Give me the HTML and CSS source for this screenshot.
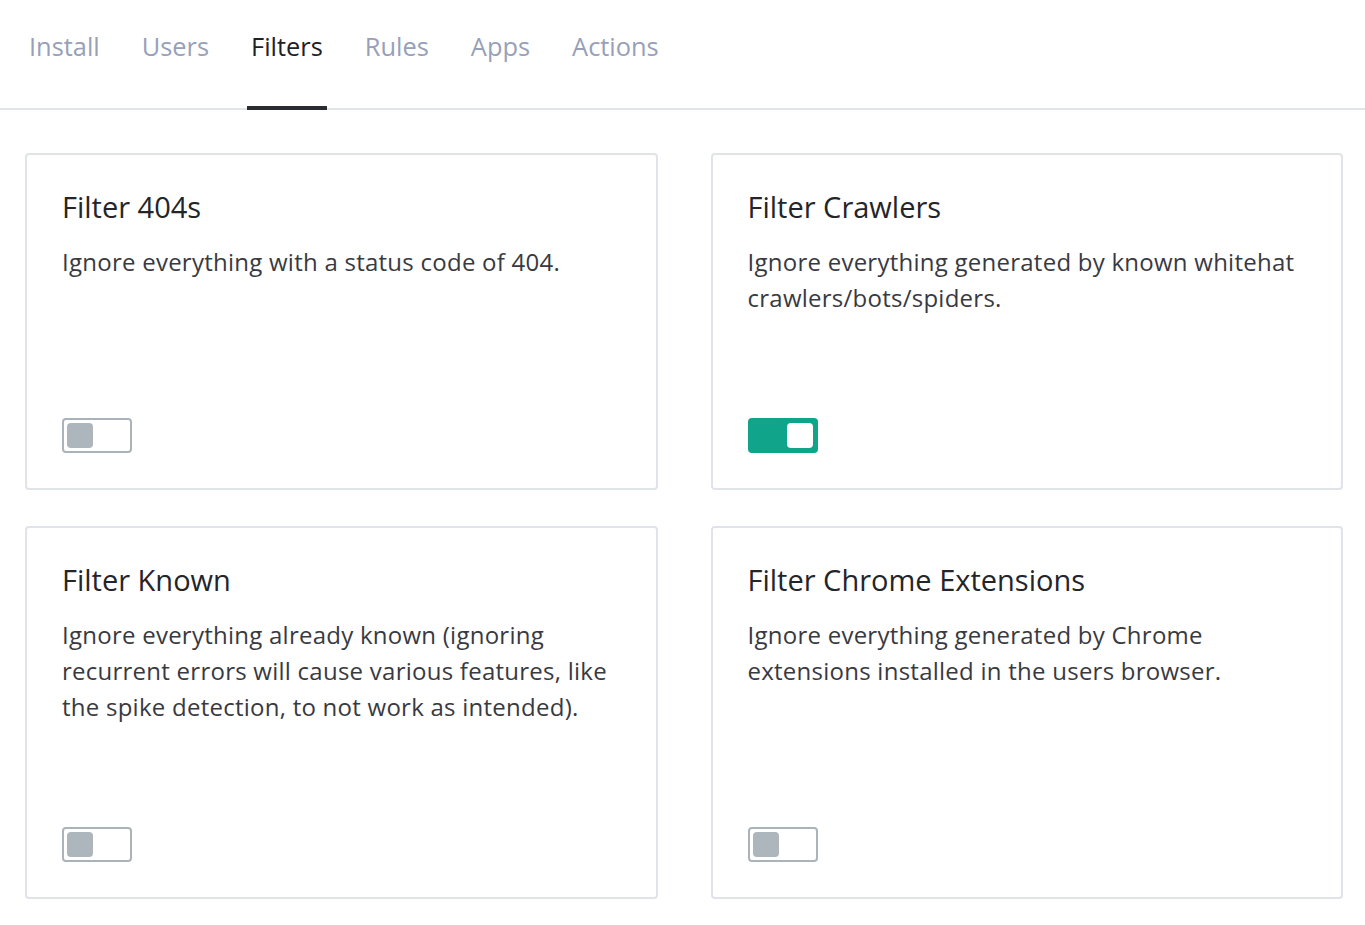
FILE: index.html
```html
<!DOCTYPE html>
<html lang="en">
<head>
<meta charset="utf-8">
<title>Filters</title>
<link rel="stylesheet" href="styles.css">
</head>
<body>
<nav class="tabs">
  <a class="tab">Install</a>
  <a class="tab">Users</a>
  <a class="tab active">Filters</a>
  <a class="tab">Rules</a>
  <a class="tab">Apps</a>
  <a class="tab">Actions</a>
</nav>
<main class="grid">
  <section class="card">
    <h2 class="title">Filter 404s</h2>
    <p class="desc">Ignore everything with a status code of 404.</p>
    <span class="toggle"><span class="knob"></span></span>
  </section>
  <section class="card">
    <h2 class="title">Filter Crawlers</h2>
    <p class="desc">Ignore everything generated by known whitehat crawlers/bots/spiders.</p>
    <span class="toggle on"><span class="knob"></span></span>
  </section>
  <section class="card">
    <h2 class="title">Filter Known</h2>
    <p class="desc">Ignore everything already known (ignoring recurrent errors will cause various features, like the spike detection, to not work as intended).</p>
    <span class="toggle"><span class="knob"></span></span>
  </section>
  <section class="card">
    <h2 class="title">Filter Chrome Extensions</h2>
    <p class="desc">Ignore everything generated by Chrome extensions installed in the users browser.</p>
    <span class="toggle"><span class="knob"></span></span>
  </section>
</main>
</body>
</html>
```
FILE: styles.css
```css
* { box-sizing: border-box; }
html, body { margin: 0; padding: 0; background: #fff; }
body { font-family: "Open Sans", "Noto Sans", sans-serif; color: #2d2f33; }

.tabs {
  display: flex;
  gap: 34px;
  height: 110px;
  padding: 0 0 0 25px;
  border-bottom: 2px solid #e1e4e8;
  align-items: stretch;
}
.tab {
  display: flex;
  align-items: center;
  padding: 0 4px 14px;
  margin-bottom: -2px;
  font-size: 25.4px;
  color: #97a0b8;
  border-bottom: 4px solid transparent;
}
.tab.active {
  color: #1f2125;
  border-bottom-color: #2a2c31;
}

.grid {
  display: grid;
  grid-template-columns: 1fr 1fr;
  column-gap: 53px;
  row-gap: 36px;
  padding: 43px 22px 26px 25px;
}
.card {
  display: flex;
  flex-direction: column;
  align-items: flex-start;
  border: 2px solid #e0e3e7;
  border-radius: 4px;
  padding: 34px 35px 35px;
}
.title {
  margin: 0;
  font-size: 29px;
  font-weight: 400;
  line-height: 36px;
  color: #232529;
}
.desc {
  margin: 19px 0 102px;
  font-size: 24px;
  letter-spacing: 0.25px;
  line-height: 36px;
  color: #383a3f;
}
.toggle {
  margin-top: auto;
  display: flex;
  align-items: center;
  width: 70px;
  height: 35px;
  padding: 3px;
  border: 2px solid #abb3ba;
  border-radius: 4px;
  background: #fff;
}
.knob {
  width: 26px;
  height: 25px;
  border-radius: 4px;
  background: #aeb6bd;
}
.toggle.on {
  background: #10a48a;
  border-color: #10a48a;
  justify-content: flex-end;
}
.toggle.on .knob { background: #fff; }
```
